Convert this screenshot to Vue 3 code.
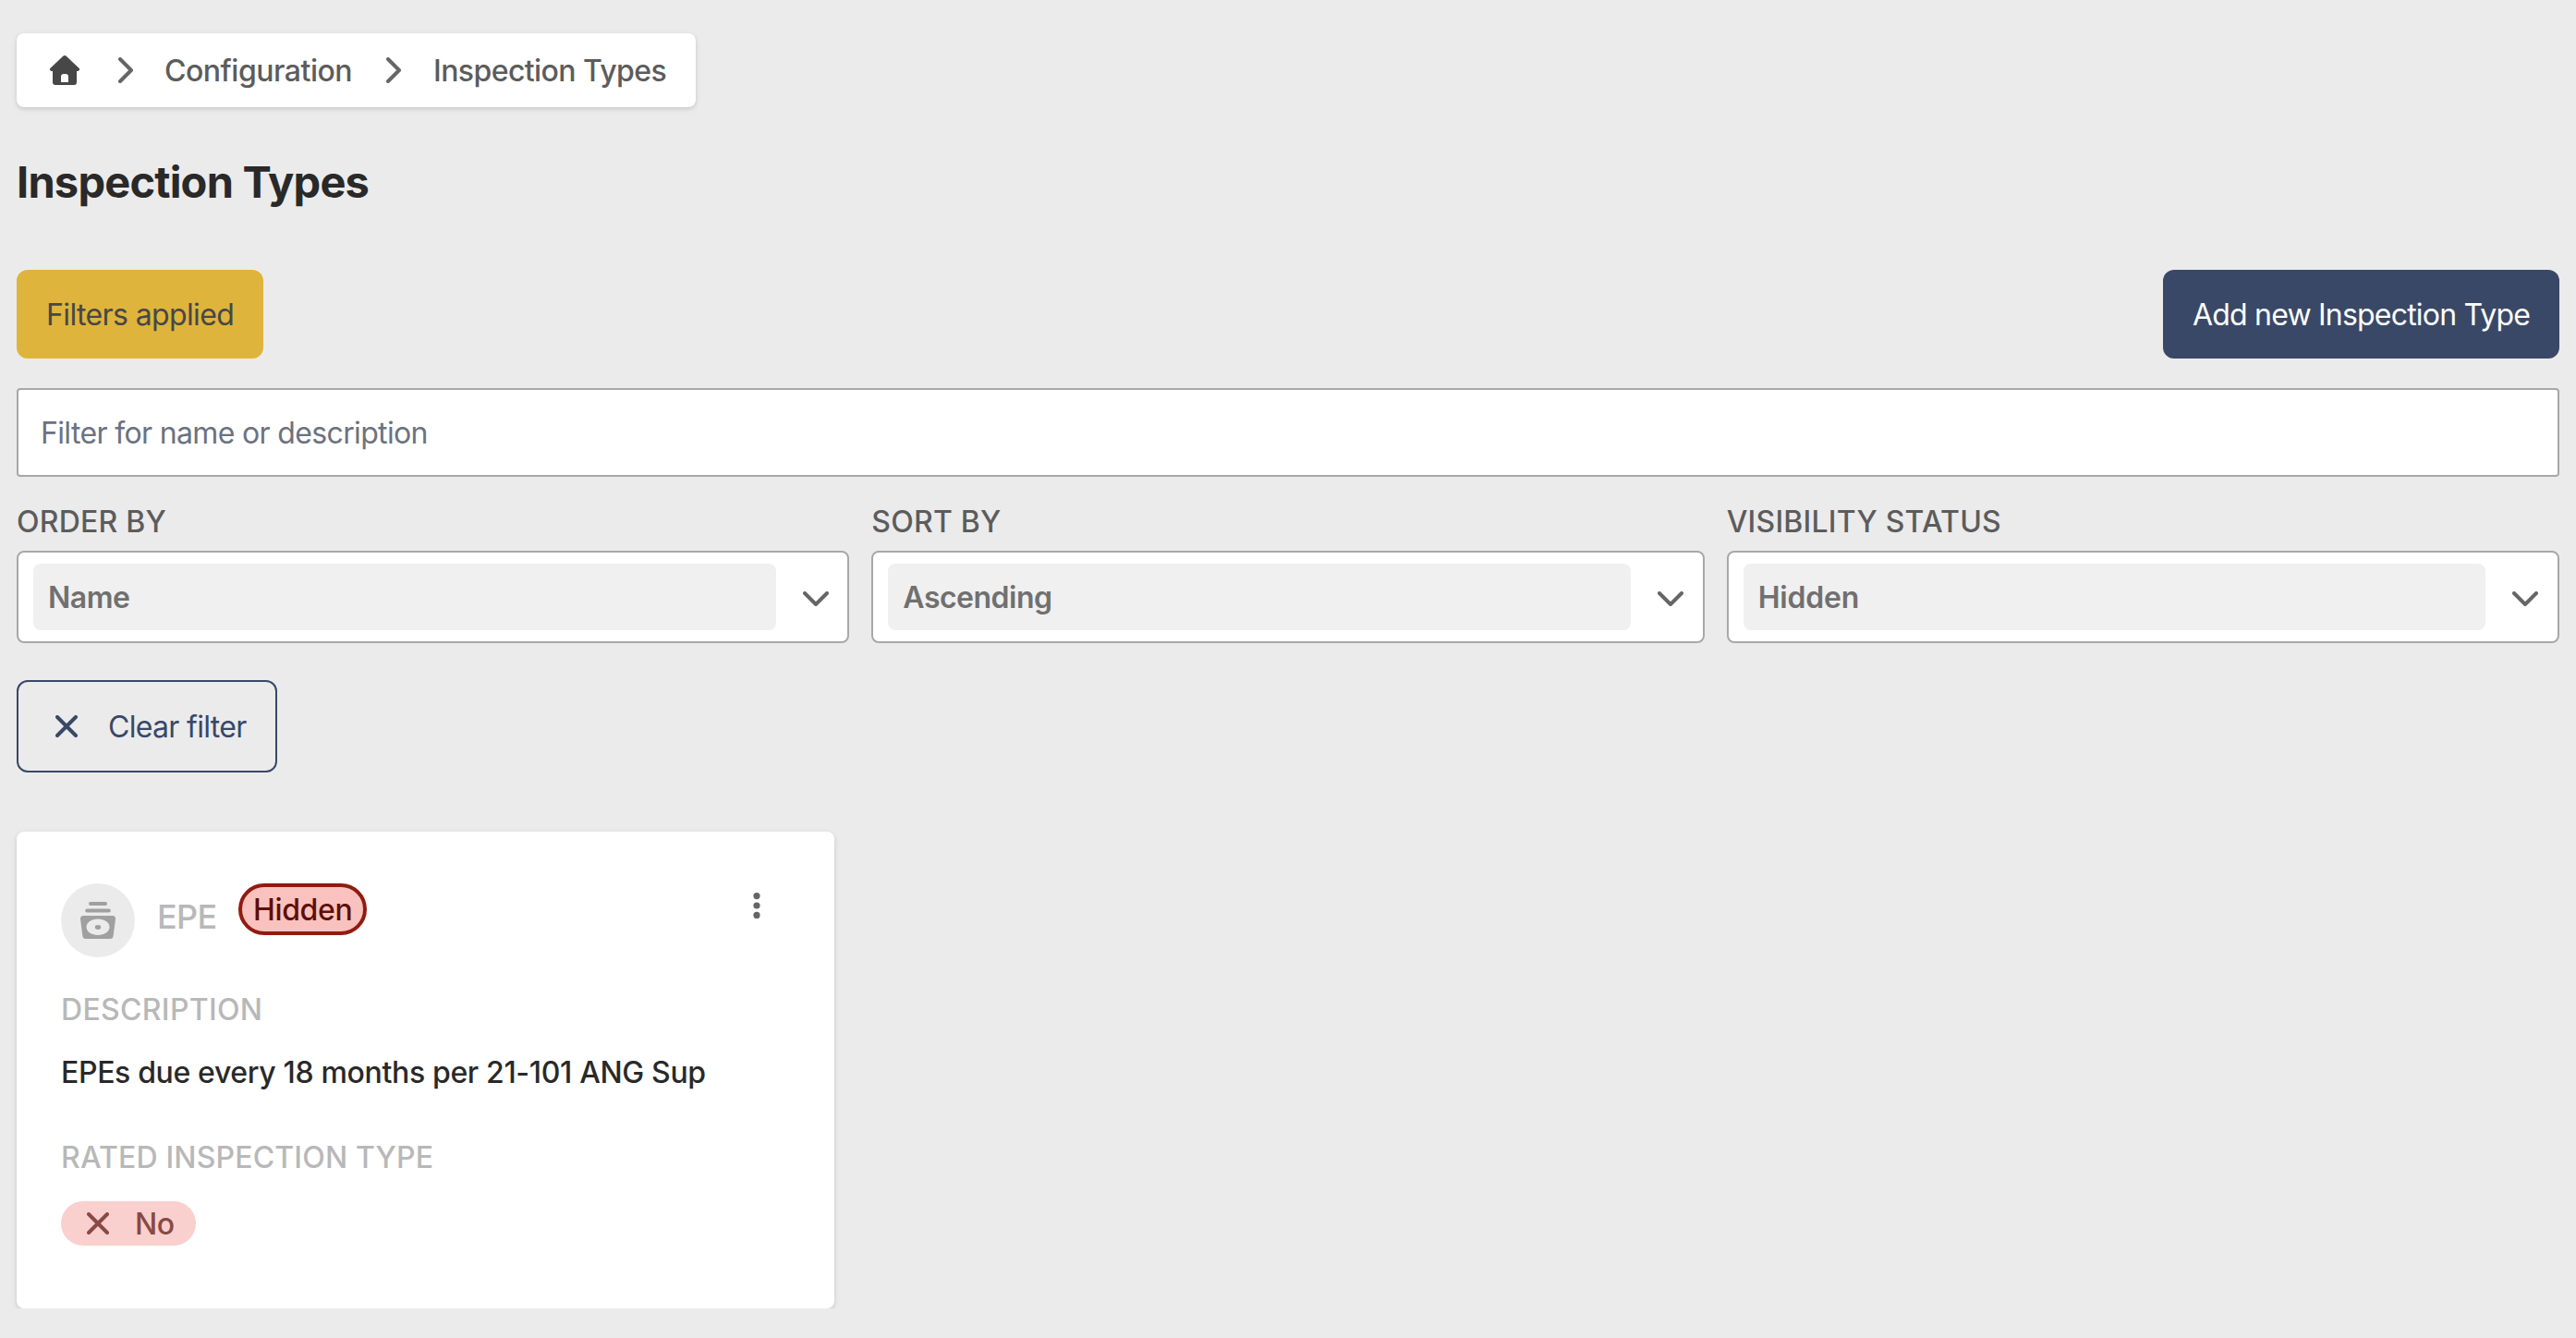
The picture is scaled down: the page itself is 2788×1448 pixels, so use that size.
<template>
  <main class="page">
    <nav class="breadcrumb">
      <svg class="icon-home" viewBox="0 0 32 32" fill="currentColor">
        <path fill-rule="evenodd" d="M14.3.8a2.5 2.5 0 0 1 3.400 0l13.800 13a1.800 1.800 0 0 1-1.300 3.100H29V29a3 3 0 0 1-3 3H6a3 3 0 0 1-3-3V16.900H1.800a1.800 1.800 0 0 1-1.300-3.100zM12 29h8v-6a3 3 0 0 0-3-3h-2a3 3 0 0 0-3 3z" />
      </svg>
      <template v-for="crumb in crumbs" :key="crumb.label">
        <svg class="icon-sep" viewBox="0 0 16 28">
          <path d="M2 2l12 12L2 26" />
        </svg>
        <a class="crumb" :class="crumb.name">{{ crumb.label }}</a>
      </template>
    </nav>

    <h1 class="title">Inspection Types</h1>

    <div class="toolbar">
      <button class="btn btn-warning">Filters applied</button>
      <button class="btn btn-primary">Add new Inspection Type</button>
    </div>

    <input v-model="search" class="search" type="text" placeholder="Filter for name or description" />

    <div class="filters">
      <div v-for="filter in filters" :key="filter.label" class="filter" :class="filter.name">
        <label class="filter-label">{{ filter.label }}</label>
        <div class="select">
          <span class="select-value">{{ filter.value }}</span>
          <svg class="icon-down" viewBox="0 0 28 16">
            <path d="M2 2l12 12L26 2" />
          </svg>
        </div>
      </div>
    </div>

    <button class="btn btn-outline" @click="search = ''">
      <svg class="icon-x" viewBox="0 0 24 24">
        <path d="M2 2l20 20M22 2L2 22" />
      </svg>
      <span class="clear-text">Clear filter</span>
    </button>

    <article class="card">
      <header class="card-header">
        <span class="avatar">
          <svg class="icon-type" viewBox="0 0 38 40" fill="currentColor">
            <rect x="9" y="0" width="20" height="4" rx="2" />
            <rect x="5.200" y="7.500" width="27.600" height="4" rx="2" />
            <path fill-rule="evenodd" d="M3 15h32a3 3 0 0 1 3 3.400l-2.400 18.700A3.400 3.400 0 0 1 32.200 40H5.800a3.400 3.400 0 0 1-3.400-2.900L0 18.400A3 3 0 0 1 3 15zM19 18.500C12 18.500 6.500 22.300 6.500 27.300S12 36 19 36s12.500-3.700 12.500-8.700S26 18.500 19 18.500z" />
            <ellipse cx="19" cy="27.500" rx="3.200" ry="2.400" />
          </svg>
        </span>
        <h2 class="card-title">EPE</h2>
        <span class="badge">Hidden</span>
        <svg class="icon-more" viewBox="0 0 8 28" fill="currentColor">
          <circle cx="4" cy="3.600" r="3.600" />
          <circle cx="4" cy="14" r="3.600" />
          <circle cx="4" cy="24.400" r="3.600" />
        </svg>
      </header>
      <h3 class="card-label description">DESCRIPTION</h3>
      <p class="card-text">EPEs due every 18 months per 21-101 ANG Sup</p>
      <h3 class="card-label rated">RATED INSPECTION TYPE</h3>
      <span class="pill">
        <svg class="icon-x" viewBox="0 0 24 24">
          <path d="M2 2l20 20M22 2L2 22" />
        </svg>
        <span class="pill-text">No</span>
      </span>
    </article>
  </main>
</template>

<script setup>
import { ref } from 'vue';

const search = ref('');

const crumbs = [
  { name: 'config', label: 'Configuration' },
  { name: 'types', label: 'Inspection Types' }
];

const filters = [
  { name: 'order', label: 'ORDER BY', value: 'Name' },
  { name: 'sort', label: 'SORT BY', value: 'Ascending' },
  { name: 'visibility', label: 'VISIBILITY STATUS', value: 'Hidden' }
];
</script>

<style>
body { background: #ebebeb; }
</style>

<style scoped>
.page,
.page * { box-sizing: border-box; }

.page {
  padding: 36px 18px 0;
  font-family: Inter, sans-serif;
  font-size: 32px;
  line-height: 48px;
  color: #292929;
}

.page svg {
  display: block;
  flex: none;
}

h1, h2, h3, p { margin: 0; }

.icon-sep,
.icon-down,
.icon-x {
  fill: none;
  stroke: currentColor;
  stroke-width: 4;
  stroke-linecap: round;
  stroke-linejoin: round;
}

/* Breadcrumb */
.breadcrumb {
  display: flex;
  align-items: center;
  width: 735px;
  height: 80px;
  padding-left: 36px;
  border-radius: 8px;
  background: #fff;
  color: #5c5c5c;
  font-weight: 500;
  white-space: nowrap;
  box-shadow: 0 2px 6px rgba(0,0,0,0.1), 0 2px 4px rgba(0,0,0,0.06);
}

.icon-home { width: 32px; height: 32px; color: #474747; }
.icon-sep { width: 16px; height: 28px; margin-left: 42px; color: #666; }
.crumb { width: 204px; margin-left: 34px; padding-top: 2px; }
.crumb.config { margin-right: -6px; letter-spacing: -0.48px; }
.crumb.types { margin-left: 35px; letter-spacing: -0.58px; }

.title {
  margin-top: 45px;
  font-size: 47px;
  font-weight: 700;
  line-height: 72px;
  letter-spacing: -0.8px;
}

/* Buttons */
.toolbar {
  display: flex;
  justify-content: space-between;
  margin-top: 59px;
}

.btn {
  display: flex;
  align-items: center;
  height: 96px;
  padding: 2px 32px 0;
  border: 0;
  border-radius: 12px;
  font: inherit;
  white-space: nowrap;
  cursor: pointer;
}

.btn-warning { width: 267px; background: #dfb43c; color: #474747; letter-spacing: -0.62px; }
.btn-primary { width: 429px; background: #394867; color: #fff; letter-spacing: -0.8px; }

.btn-outline {
  width: 282px;
  height: 100px;
  margin-top: 40px;
  padding: 0 40px;
  gap: 33px;
  border: 2px solid #394867;
  background: transparent;
  color: #394867;
  letter-spacing: -0.68px;
}
.clear-text { padding-top: 2px; }

.icon-x { width: 24px; height: 24px; }

/* Filters */
.search {
  display: block;
  width: 100%;
  height: 96px;
  margin-top: 32px;
  padding: 0 24px;
  border: 2px solid #a8a8a8;
  border-radius: 4px;
  background: #fff;
  font: inherit;
  letter-spacing: -0.65px;
}
.search::placeholder { color: #6b7280; opacity: 1; }

.filters {
  display: grid;
  grid-template-columns: repeat(3, 1fr);
  gap: 24px;
  margin-top: 24px;
}

.filter-label {
  display: block;
  padding-top: 1px;
  color: #5c5c5c;
  font-weight: 500;
  letter-spacing: 0.22px;
}

.select {
  display: flex;
  align-items: center;
  height: 100px;
  margin-top: 7px;
  padding: 0 20.5px 0 16px;
  border: 2px solid #a8a8a8;
  border-radius: 8px;
  background: #fff;
}

.select-value {
  flex: 1;
  margin-right: 29px;
  padding: 13px 16px 11px;
  border-radius: 8px;
  background: #f0f0f0;
  color: #707070;
  font-weight: 600;
  letter-spacing: -0.5px;
}
.visibility .select-value { letter-spacing: -0.2px; }

.icon-down { width: 28px; height: 16px; margin-top: 4px; color: #666; }

/* Card */
.card {
  width: 885px;
  height: 516px;
  margin-top: 64px;
  padding: 56px 48px 0;
  border-radius: 8px;
  background: #fff;
  box-shadow: 0 2px 6px rgba(0,0,0,0.1), 0 2px 4px rgba(0,0,0,0.06);
}

.card-header {
  display: flex;
  align-items: flex-start;
  height: 80px;
}

.avatar {
  display: flex;
  align-items: center;
  justify-content: center;
  width: 80px;
  height: 80px;
  border-radius: 50%;
  background: #ebebeb;
  color: #a0a0a0;
}

.icon-type { width: 38px; height: 40px; }

.card-title {
  width: 88px;
  margin: 8px 0 0 24px;
  color: #b8b8b8;
  font-size: 36px;
  font-weight: 500;
  line-height: 56px;
  letter-spacing: -0.7px;
}

.badge {
  width: 139px;
  height: 56px;
  padding: 1px 0 0 12px;
  border: 4px solid #911b11;
  border-radius: 28px;
  background: #fac2be;
  color: #5e0f08;
  font-weight: 500;
  letter-spacing: -0.35px;
}

.icon-more { width: 8px; height: 28px; margin: 10px 32px 0 auto; color: #666; }

.card-label {
  color: #b8b8b8;
  font-size: 32px;
  font-weight: 500;
}
.card-label.description { margin-top: 33px; letter-spacing: 0.32px; }
.card-label.rated { margin-top: 44px; letter-spacing: 0.16px; }

.card-text {
  margin-top: 20px;
  font-weight: 500;
  letter-spacing: -0.35px;
  white-space: nowrap;
}

.pill {
  display: flex;
  align-items: center;
  gap: 28px;
  width: 146px;
  height: 48px;
  margin-top: 23px;
  padding-left: 28px;
  border-radius: 24px;
  background: #f9d0cd;
  color: #894944;
  font-weight: 500;
  letter-spacing: -0.4px;
}
.pill-text { padding-top: 2px; }
</style>
